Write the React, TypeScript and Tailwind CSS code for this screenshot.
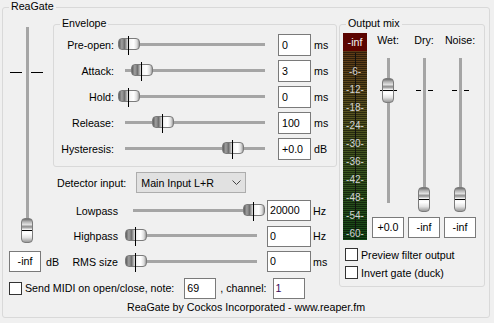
import React from 'react';

const hThumb =
  'absolute top-[3px] h-[12px] w-[22px] rounded-[4px] border border-[#7b7b7b] bg-[linear-gradient(to_right,#5c5c5c_0%,#a0a0a0_14%,#6e6e6e_28%,#cfcfcf_42%,#f7f7f7_56%,#ffffff_74%,#dcdcdc_90%,#9b9b9b_100%)]';
const vThumb =
  'absolute left-0 h-[25px] w-[12px] rounded-[4px] border border-[#7b7b7b] bg-[linear-gradient(to_bottom,#6f6f6f_0%,#b4b4b4_12%,#e0e0e0_24%,#8c8c8c_34%,#f4f4f4_46%,#ffffff_62%,#e4e4e4_80%,#9a9a9a_100%)]';

function HSlider({ size, track, thumb }: { size: string; track: string; thumb: number }) {
  return (
    <div className={`relative h-[20px] shrink-0 ${size}`}>
      <div className={`absolute top-[8px] h-[3px] bg-[#a5a5a5] ${track}`} />
      <div className={hThumb} style={{ left: thumb }} />
      <div className="absolute top-[1px] h-[19px] w-px bg-black" style={{ left: thumb + 10 }} />
    </div>
  );
}

function VThumb({ top }: { top: number }) {
  return (
    <div className={vThumb} style={{ top }}>
      <div className="mt-[11px] h-px bg-black" />
    </div>
  );
}

function Field({ value, className }: { value: string; className: string }) {
  return (
    <div className={`shrink-0 bg-white border border-[#7a7a7a] whitespace-nowrap ${className}`}>{value}</div>
  );
}

function Check() {
  return <div className="w-[13px] h-[13px] shrink-0 border border-[#333333] bg-white" />;
}

function Group({ label, className, children }: { label: string; className: string; children?: React.ReactNode }) {
  return (
    <div className={`relative border border-[#d9d9d9] rounded-[3px] ${className}`}>
      <span className="absolute top-[-9px] left-[6px] px-[2px] bg-[#f0f0f0] leading-[14px] whitespace-nowrap">
        {label}
      </span>
      {children}
    </div>
  );
}

const envelope = [
  { label: 'Pre-open:', thumb: 0, value: '0', unit: 'ms' },
  { label: 'Attack:', thumb: 13, value: '3', unit: 'ms' },
  { label: 'Hold:', thumb: 0, value: '0', unit: 'ms' },
  { label: 'Release:', thumb: 34, value: '100', unit: 'ms' },
  { label: 'Hysteresis:', thumb: 104, value: '+0.0', unit: 'dB' },
];

const filters = [
  { label: 'Lowpass', thumb: 118, value: '20000', unit: 'Hz', row: 'h-[25px]' },
  { label: 'Highpass', thumb: 0, value: '0', unit: 'Hz', row: 'h-[26px]' },
  { label: 'RMS size', thumb: 0, value: '0', unit: 'ms', row: 'h-[25px]' },
];

const marks = ['-6-', '-12-', '-18-', '-24-', '-30-', '-36-', '-42-', '-48-', '-54-', '-60-'];

const mix = [
  { label: 'Wet:', thumb: 28, value: '+0.0' },
  { label: 'Dry:', thumb: 137, value: '-inf' },
  { label: 'Noise:', thumb: 137, value: '-inf' },
];

function Meter() {
  return (
    <div className="w-[24px] h-[205px] shrink-0 flex flex-col">
      <div className="h-[18px] bg-[#5b0400] text-[#f2f2f2] text-center leading-[18px]">-inf</div>
      <div className="relative flex-1 bg-[linear-gradient(to_bottom,#5e3a16_0%,#58521f_32%,#3c5720_62%,#124616_100%)]">
        <div className="absolute inset-0 bg-[repeating-linear-gradient(to_bottom,transparent_0px,transparent_1px,rgba(0,0,0,0.5)_1px,rgba(0,0,0,0.5)_2px)]" />
        <div className="absolute left-[12px] top-[2px] bottom-0 w-px bg-[#121212]" />
        <div className="relative flex flex-col items-center gap-[6px] pt-[15px] text-[10px] leading-[12px] text-[#d2d2d2]">
          {marks.map((m) => (
            <span key={m}>{m}</span>
          ))}
        </div>
      </div>
    </div>
  );
}

export default function App() {
  return (
    <div className="w-[494px] h-[323px] bg-[#f0f0f0] pt-[7px] pl-[2px] font-['Liberation_Sans',Arial,sans-serif] text-[10.67px] text-black">
      <Group label="ReaGate" className="w-[488px] h-[311px] flex flex-col">
        <div className="flex">
          <div className="flex flex-col w-[335px]">
            <div className="flex">
              {/* master output slider */}
              <div className="w-[50px] shrink-0 flex flex-col">
                <div className="relative ml-[18px] mt-[19px] w-[12px] h-[217px]">
                  <div className="absolute left-[5px] top-0 bottom-[9px] w-[3px] bg-[#a5a5a5]" />
                  <div className="absolute left-[-11px] top-[45px] w-[12px] h-px bg-black" />
                  <div className="absolute left-[10px] top-[45px] w-[12px] h-px bg-black" />
                  <VThumb top={191} />
                </div>
                <div className="flex items-center mt-[7px] ml-[6px]">
                  <Field value="-inf" className="w-[32px] h-[21px] text-center leading-[19px]" />
                  <span className="ml-[5px]">dB</span>
                </div>
              </div>

              <div className="w-[284px] shrink-0 flex flex-col">
                <Group label="Envelope" className="mt-[16px] h-[143px] pt-[7px]">
                  {envelope.map((r) => (
                    <div key={r.label} className="flex items-center h-[26px]">
                      <span className="w-[60px] text-right whitespace-nowrap">{r.label}</span>
                      <div className="ml-[4px]">
                        <HSlider size="w-[154px]" track="left-[7px] right-[7px]" thumb={r.thumb} />
                      </div>
                      <Field value={r.value} className="ml-[6px] w-[33px] h-[22px] pl-[3px] leading-[20px]" />
                      <span className="ml-[3px]">{r.unit}</span>
                    </div>
                  ))}
                </Group>

                <div className="flex items-center h-[21px] mt-[5px] ml-[4px]">
                  <span className="whitespace-nowrap">Detector input:</span>
                  <div className="ml-[10px] w-[110px] h-[21px] bg-[#e1e1e1] border border-[#adadad] flex items-center justify-between pl-[4px] pr-[4px]">
                    <span className="whitespace-nowrap">Main Input L+R</span>
                    <svg width="9" height="6" viewBox="0 0 9 6">
                      <polyline points="0.5,0.5 4.5,4.5 8.5,0.5" fill="none" stroke="#444" strokeWidth="1" />
                    </svg>
                  </div>
                </div>

                <div className="mt-[5px] flex flex-col">
                  {filters.map((r) => (
                    <div key={r.label} className={`flex items-center ${r.row}`}>
                      <span className="w-[65px] text-right whitespace-nowrap">{r.label}</span>
                      <div className="ml-[7px]">
                        <HSlider size="w-[140px]" track="left-[8px] right-[8px]" thumb={r.thumb} />
                      </div>
                      <Field value={r.value} className="ml-[2px] w-[44px] h-[21px] pl-[2px] leading-[19px]" />
                      <span className="ml-[2px]">{r.unit}</span>
                    </div>
                  ))}
                </div>
              </div>
            </div>

            <div className="flex items-center h-[22px] mt-[3px] ml-[6px]">
              <Check />
              <span className="ml-[3px] whitespace-nowrap">Send MIDI on open/close, note:</span>
              <Field value="69" className="ml-[10px] w-[32px] h-[21px] pl-[2px] leading-[19px]" />
              <span className="ml-[4px] whitespace-nowrap">, channel:</span>
              <Field value="1" className="ml-[6px] w-[32px] h-[21px] pl-[2px] leading-[19px] text-[#3a0a5a]" />
            </div>
          </div>

          <Group label="Output mix" className="ml-[1px] mt-[16px] w-[146px] h-[263px] pt-[8px] pl-[3px] flex flex-col">
            <div className="flex">
              <Meter />
              <div className="ml-[5px] flex gap-[4px]">
                {mix.map((c) => (
                  <div key={c.label} className="w-[32px] flex flex-col items-center">
                    <span className="h-[14px] leading-[14px]">{c.label}</span>
                    <div className="relative mt-[3px] w-[32px] h-[164px]">
                      <div className="absolute left-[15px] top-[8px] bottom-[11px] w-[3px] bg-[#a5a5a5]" />
                      <div className="absolute left-[8px] top-[40px] w-[5px] h-px bg-black" />
                      <div className="absolute left-[20px] top-[40px] w-[5px] h-px bg-black" />
                      <div className="absolute left-[10px] top-0 w-[12px] h-full">
                        <VThumb top={c.thumb} />
                      </div>
                    </div>
                    <Field value={c.value} className="mt-[3px] w-[32px] h-[21px] text-center leading-[19px]" />
                  </div>
                ))}
              </div>
            </div>
            <div className="mt-[10px] ml-[2px] flex flex-col gap-[5px]">
              <div className="flex items-center h-[13px]">
                <Check />
                <span className="ml-[3px] whitespace-nowrap">Preview filter output</span>
              </div>
              <div className="flex items-center h-[13px]">
                <Check />
                <span className="ml-[3px] whitespace-nowrap">Invert gate (duck)</span>
              </div>
            </div>
          </Group>
        </div>

        <div className="flex-1 flex items-center justify-center pb-[2px] whitespace-nowrap">
          ReaGate by Cockos Incorporated - www.reaper.fm
        </div>
      </Group>
    </div>
  );
}
